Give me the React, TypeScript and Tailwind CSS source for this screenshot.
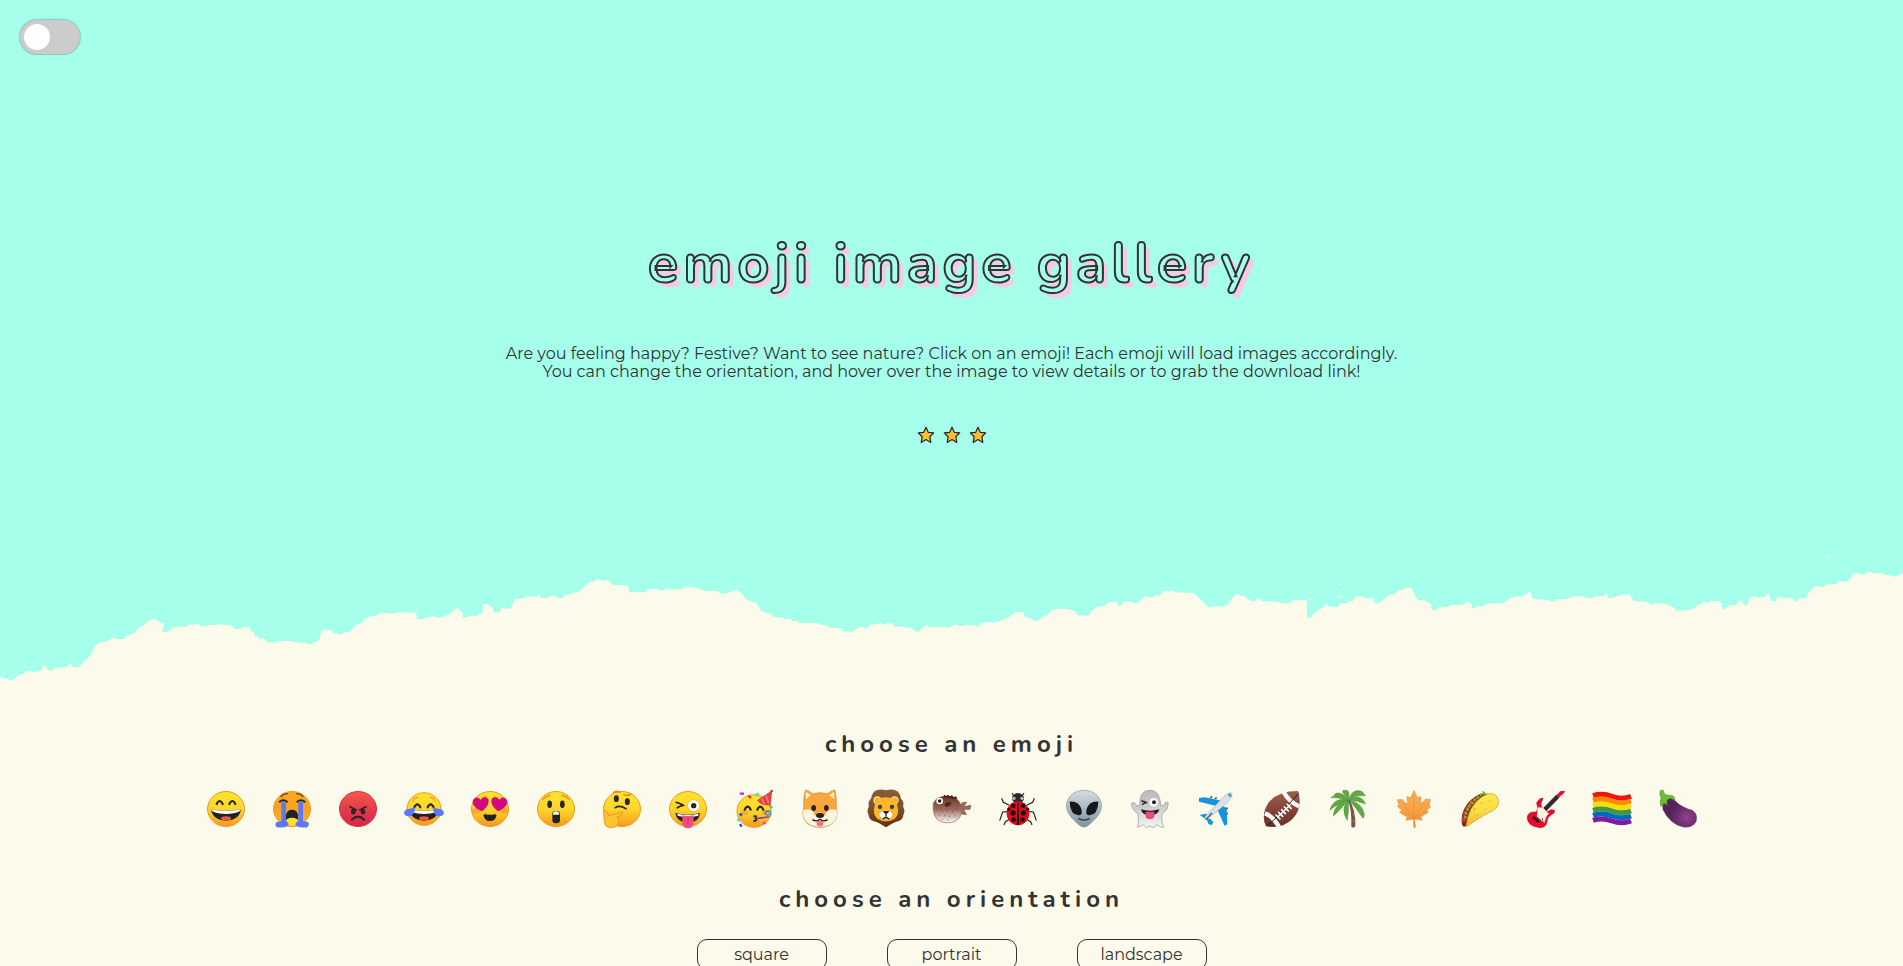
import type { ReactNode } from 'react'

const shoreLeft =
  '0,408 6,414 18,416 24,420 36,418 44,406 58,402 62,394 74,393 80,397 100,393 106,377 113,378 116,389 128,393 134,383 163,382 168,371 174,371 180,382 195,381 203,368 222,346 230,325 241,308 264,303 275,293 282,297 304,297 310,288 330,280 338,264 352,256 367,241 376,237 388,243 391,248 402,252 397,276 411,276 426,261 455,260 462,255 478,254 485,248 492,259 508,258 515,255 535,254 540,250 545,254 565,255 575,266 590,268 594,261 610,261 617,277 624,278 624,288 632,289 634,298 645,294 656,307 680,307 684,303 716,303 720,307 748,308 752,312 766,312 770,306 780,302 785,290 787,271 814,271 816,280 830,281 835,286 843,277 858,275 872,254 888,249 892,238 908,230 912,227 922,228 926,222 940,219 965,221 972,217 1020,218 1021,238 1037,238 1040,233 1052,232 1060,228 1068,232 1085,232 1105,219 1110,211 1120,205 1133,217 1134,233 1146,232 1150,228 1170,227 1174,222 1182,221 1183,191 1194,192 1207,203 1209,217 1225,216 1227,205 1233,203 1238,207 1251,205 1262,177 1285,175 1290,170 1315,169 1321,163 1326,174 1342,174 1355,165 1367,174 1381,174 1384,165 1402,163 1405,158 1418,157 1432,137 1447,126 1458,123 1464,117 1475,122 1490,119 1502,136 1518,135 1540,137 1541,158 1555,157 1568,155 1568,452 0,452'
const shoreMiddle =
  '0,158 14,155 20,158 40,156 44,148 68,148 72,152 84,151 90,145 96,149 128,148 132,141 140,139 146,142 165,143 170,148 184,152 212,153 218,158 228,162 246,157 261,149 272,160 286,179 310,190 320,210 332,218 347,222 352,232 375,233 380,238 392,235 397,243 410,242 412,248 462,249 466,254 480,256 490,264 519,265 522,275 548,275 554,266 570,260 580,265 592,252 600,254 612,249 624,254 630,249 644,252 648,260 670,260 680,265 688,263 700,275 709,275 713,267 728,255 732,261 775,261 783,265 792,255 800,254 806,259 820,256 846,256 850,260 858,259 861,250 880,245 890,248 908,243 930,230 944,217 963,216 968,232 980,235 993,243 1000,243 1010,230 1022,226 1034,211 1050,206 1074,207 1090,215 1097,226 1123,227 1130,213 1145,200 1162,199 1170,190 1182,185 1193,186 1197,200 1205,194 1209,185 1228,185 1232,190 1244,189 1262,169 1278,174 1290,164 1298,169 1306,153 1325,154 1329,150 1334,157 1380,159 1395,174 1416,201 1428,201 1433,196 1440,201 1464,196 1470,181 1486,162 1494,167 1508,169 1514,178 1527,185 1530,185 1538,174 1550,184 1568,185 1568,452 0,452'
const shoreRight =
  '0,185 38,185 42,190 66,190 74,181 107,180 108,233 122,232 120,226 145,202 150,203 153,191 163,200 184,201 188,192 207,189 212,184 222,182 228,169 244,170 248,175 271,175 273,190 285,189 308,165 322,163 334,150 348,148 352,143 363,143 378,179 398,182 412,192 413,211 424,211 428,203 455,200 461,195 490,194 500,184 510,190 513,206 525,201 530,195 534,202 550,191 588,190 606,174 624,169 643,167 650,154 657,157 658,174 670,178 700,180 706,185 715,184 720,177 744,178 750,174 765,169 785,169 790,174 806,174 812,170 834,167 842,159 846,174 860,173 870,167 885,164 898,163 908,184 940,185 950,195 958,190 986,191 1010,206 1012,212 1040,211 1056,205 1065,195 1082,185 1088,190 1096,184 1118,183 1124,192 1125,207 1132,206 1143,196 1160,195 1166,183 1173,181 1177,195 1187,194 1193,172 1208,169 1215,174 1230,170 1239,160 1244,181 1255,185 1262,171 1275,174 1297,175 1302,184 1310,184 1314,175 1332,173 1336,160 1355,138 1375,142 1380,133 1404,133 1408,122 1428,126 1438,118 1446,101 1460,100 1466,105 1488,95 1494,100 1518,100 1524,105 1538,106 1546,110 1555,108 1562,101 1568,100 1575,100 1575,452 0,452'

function TornEdge() {
  return (
    <svg className="block h-[150px] w-full bg-[#a6ffea]" viewBox="0 0 4662.35 450" preserveAspectRatio="none" aria-hidden="true">
      <g fill="#fcfaea">
        <polygon points={shoreLeft} />
        <polygon points={shoreMiddle} transform="translate(1543.5 0)" />
        <g transform="translate(3094.4 0)">
          <polygon points={shoreRight} />
          <ellipse cx="115" cy="176" rx="4" ry="3" />
          <ellipse cx="187" cy="133" rx="3" ry="3.5" />
          <ellipse cx="187" cy="171" rx="3" ry="3.5" />
          <ellipse cx="1382" cy="50" rx="5" ry="7" opacity=".35" />
        </g>
      </g>
    </svg>
  )
}

function Gradients() {
  const stops: [string, string, string, string][] = [
    ['face', '#fde32f', '#fcd62c', '#f59a1e'],
    ['sad', '#f9a825', '#f6a323', '#fbb423'],
    ['rage', '#f7584d', '#e23c4a', '#d62748'],
    ['shiba', '#fbaa3c', '#f9a53c', '#f0932b'],
    ['fur', '#8a5c36', '#7d4f2b', '#5d330e'],
    ['fish', '#6b2f22', '#9a6a5c', '#ffffff'],
    ['alien', '#d5dde2', '#a9b7c0', '#82929c'],
    ['ghost', '#b9b9b9', '#d0d0d0', '#f5f5f5'],
    ['ball', '#a15c48', '#85463a', '#653128'],
    ['leaf', '#fcb04e', '#f9a245', '#f29140'],
    ['taco', '#ffe94c', '#fcdc48', '#f0b92e'],
  ]
  return (
    <svg className="absolute size-0" aria-hidden="true">
      <defs>
        {stops.map(([id, a, b, c]) => (
          <linearGradient key={id} id={id} x1="0" y1="0" x2="0" y2="1">
            <stop offset="0" stopColor={a} />
            <stop offset=".5" stopColor={b} />
            <stop offset="1" stopColor={c} />
          </linearGradient>
        ))}
        <radialGradient id="plum" cx=".72" cy=".68" r=".5">
          <stop offset="0" stopColor="#93408f" />
          <stop offset="1" stopColor="#542459" />
        </radialGradient>
      </defs>
    </svg>
  )
}

const Face = ({ fill = 'url(#face)', edge = '#f09a20' }: { fill?: string; edge?: string }) => (
  <ellipse cx="60" cy="60" rx="55.5" ry="52.5" fill={fill} stroke={edge} strokeWidth="3" />
)
const Arcs = ({ y, l = 41, r = 79 }: { y: number; l?: number; r?: number }) => (
  <g fill="none" stroke="#2b2520" strokeWidth="6.5" strokeLinecap="round" transform={`translate(0 ${y})`}>
    <path d={`M${l - 9} 5Q${l} -13 ${l + 9} 5`} />
    <path d={`M${r - 9} 5Q${r} -13 ${r + 9} 5`} />
  </g>
)
const Grin = () => (
  <g>
    <path d="M15 61Q60 70 105 61Q100 94 60 95Q20 94 15 61Z" fill="#222" />
    <path d="M15 61Q60 70 105 61Q102 74 60 75Q18 74 15 61Z" fill="#fff" />
    <ellipse cx="60" cy="88" rx="15" ry="6" fill="#ef5350" />
  </g>
)

const emojis: [string, ReactNode][] = [
  ['happy', <><Face /><Arcs y={40} /><Grin /></>],
  ['sad', <>
    <Face fill="url(#sad)" />
    <g fill="none" stroke="#6d4b2a" strokeWidth="4" strokeLinecap="round"><path d="M27 23Q34 14 46 14M74 14Q86 14 93 23" /></g>
    <g fill="none" stroke="#2b2520" strokeWidth="6" strokeLinecap="round"><path d="M23 38Q34 29 45 38M76 38Q87 29 98 38" /></g>
    <path d="M42 94V78Q45 62 60 62T78 78V94Z" fill="#222" /><ellipse cx="60" cy="98" rx="19" ry="12" fill="#fde030" />
    <path d="M28 38H42V96Q52 101 49 109Q42 118 14 115Q6 106 14 99L28 96ZM79 38H93V96L108 99Q114 106 106 115Q78 118 71 109Q68 101 79 96Z" fill="#5c78f8" />
  </>],
  ['angry', <>
    <Face fill="url(#rage)" edge="#d93246" />
    <g stroke="#292528" fill="none" strokeWidth="5" strokeLinecap="round"><path d="M36 53L55 63M84 53L65 63" /><path d="M42 92Q60 74 79 92" strokeWidth="6" /></g>
    <ellipse cx="46" cy="68" rx="7" ry="8" fill="#292528" /><ellipse cx="75" cy="68" rx="7" ry="8" fill="#292528" />
  </>],
  ['laughing', <>
    <ellipse cx="60" cy="60" rx="51" ry="49" fill="url(#face)" stroke="#f09a20" strokeWidth="3" />
    <path d="M26 36Q31 25 42 25M78 25Q89 25 94 36" fill="none" stroke="#ee9823" strokeWidth="4" />
    <Arcs y={50} l={40} r={80} /><Grin />
    <path d="M34 55Q32 76 21 81Q7 85 1 76Q-2 66 9 61Q20 59 34 55ZM86 55Q88 76 99 81Q113 85 119 76Q122 66 111 61Q100 59 86 55Z" fill="#5c78f8" />
  </>],
  ['love', <>
    <Face /><ellipse cx="18" cy="65" rx="13" ry="8" fill="#f58a38" opacity=".6" /><ellipse cx="102" cy="65" rx="13" ry="8" fill="#f58a38" opacity=".6" />
    <g fill="#d5087f" stroke="#bb066d" strokeWidth="1.5">
      <path d="M37 66C24 61 8 52 9 38C10 24 27 23 32 34C39 19 57 23 55 38C54 50 45 58 37 66Z" />
      <path d="M83 66C96 61 112 52 111 38C110 24 93 23 88 34C81 19 63 23 65 38C66 50 75 58 83 66Z" />
    </g>
    <path d="M41 81Q39 75 46 76Q60 79 74 76Q81 75 79 81Q76 96 60 96T41 81Z" fill="#222" />
  </>],
  ['surprised', <>
    <Face /><path d="M22 31Q29 20 42 20M78 20Q91 20 98 31" fill="none" stroke="#ee9823" strokeWidth="5" strokeLinecap="round" />
    <ellipse cx="41" cy="46" rx="7" ry="11.5" fill="#2b2520" /><ellipse cx="79" cy="46" rx="7" ry="11.5" fill="#2b2520" />
    <rect x="49" y="66" width="23" height="37" rx="10" fill="#222" /><path d="M51 77Q51 67 60 67T70 77Z" fill="#fff" />
  </>],
  ['thinking', <>
    <Face /><path d="M34 12Q40 3 54 10M66 17Q78 22 86 15" fill="none" stroke="#e88f20" strokeWidth="5" strokeLinecap="round" />
    <ellipse cx="43" cy="29" rx="7.5" ry="10" fill="#2b2520" /><ellipse cx="76" cy="38" rx="7.5" ry="10" fill="#2b2520" />
    <path d="M40 56Q52 47 72 59" fill="none" stroke="#2b2520" strokeWidth="5" strokeLinecap="round" />
    <path d="M6 68Q15 61 20 80Q34 77 55 69Q65 67 61 75Q56 81 44 85Q54 86 50 94Q50 109 37 114Q21 120 11 110Q5 101 6 68Z" fill="#fdc62e" stroke="#ef9423" strokeWidth="3" strokeLinejoin="round" />
  </>],
  ['silly', <>
    <Face /><path d="M25 40Q36 42 45 49Q36 51 28 56" fill="none" stroke="#2b2520" strokeWidth="5.5" strokeLinecap="round" />
    <circle cx="77" cy="50" r="18" fill="#fff" stroke="#e7a722" strokeWidth="2" /><circle cx="77" cy="50" r="8" fill="#2b2520" />
    <path d="M22 72Q60 81 96 72Q94 101 60 101T22 72Z" fill="#222" /><path d="M28 74Q60 81 91 74V80Q60 87 29 80Z" fill="#fff" />
    <path d="M43 79Q60 84 77 79V98Q76 118 60 118T43 98Z" fill="#ed4e7e" /><path d="M60 84V106" stroke="#bd3863" strokeWidth="3" />
  </>],
  ['party', <>
    <ellipse cx="60" cy="66" rx="51" ry="49" fill="url(#face)" stroke="#f09a20" strokeWidth="3" />
    <ellipse cx="31" cy="71" rx="11" ry="7" fill="#f58a38" opacity=".6" /><ellipse cx="94" cy="70" rx="10" ry="7" fill="#f58a38" opacity=".6" />
    <Arcs y={57} l={41} r={79} /><path d="M113 6L71 34Q81 49 109 48Z" fill="#e24446" stroke="#b93238" strokeWidth="2" /><path d="M83 29L91 45M96 20L104 43" stroke="#f58a86" strokeWidth="4" />
    <circle cx="113" cy="6" r="4" fill="#d83942" /><path d="M58 82Q72 78 64 88Q74 93 58 97" fill="none" stroke="#292522" strokeWidth="5" />
    <path d="M70 88L104 84" stroke="#81439c" strokeWidth="5" /><path d="M106 84Q116 68 103 66Q91 67 94 75Q101 82 105 74" fill="none" stroke="#4786c7" strokeWidth="4" />
    <g strokeWidth="7"><path d="M17 14H30" stroke="#f319bd" /><path d="M64 20L74 13" stroke="#2ce0ec" /><path d="M43 20L51 27" stroke="#e93532" /><path d="M108 50L114 57" stroke="#53ca35" /><path d="M17 74L24 80M18 105L23 113" stroke="#2347de" /><path d="M10 91L18 95" stroke="#2ce0ec" /><path d="M87 104L95 101" stroke="#f33bce" /></g>
  </>],
  ['dog', <>
    <path d="M16 3Q19 1 38 14Q60 8 82 14Q101 1 105 3Q111 32 109 55Q118 88 94 106Q60 125 25 106Q2 89 11 55Q9 27 16 3Z" fill="url(#shiba)" stroke="#d58b39" strokeWidth="2" />
    <path d="M18 8L32 19L17 31ZM102 8L88 19L103 31Z" fill="#fff5ca" />
    <path d="M10 63Q40 54 45 82Q52 68 60 70Q68 68 75 82Q80 54 110 63Q116 92 92 106Q60 123 28 106Q4 90 10 63Z" fill="#fff4df" />
    <ellipse cx="41" cy="57" rx="7" ry="9" fill="#26211f" /><ellipse cx="79" cy="57" rx="7" ry="9" fill="#26211f" /><ellipse cx="60" cy="79" rx="12" ry="8" fill="#26211f" />
    <path d="M37 92Q50 100 60 91Q70 100 83 92" fill="none" stroke="#26211f" strokeWidth="4" /><path d="M50 96H70V106Q68 113 60 113T50 106Z" fill="#f2776f" />
  </>],
  ['lion', <>
    <path d="M60 4Q82 -2 96 8Q104 18 105 29Q116 39 111 52Q119 67 112 78Q111 91 99 96Q84 99 60 115Q36 99 21 96Q9 91 8 78Q1 67 9 52Q4 39 15 29Q16 18 24 8Q38 -2 60 4Z" fill="url(#fur)" />
    <circle cx="34" cy="34" r="10" fill="#f3a834" stroke="#fbdb7a" strokeWidth="4" /><circle cx="86" cy="34" r="10" fill="#f3a834" stroke="#fbdb7a" strokeWidth="4" />
    <path d="M27 45Q32 25 60 25T93 45Q102 77 86 89Q60 105 34 89Q18 77 27 45Z" fill="#fcb72a" />
    <circle cx="42" cy="54" r="6.5" fill="#433d32" /><circle cx="78" cy="54" r="6.5" fill="#433d32" />
    <ellipse cx="60" cy="77" rx="19" ry="12" fill="#fff" /><path d="M51 66H69Q69 71 60 76Q51 71 51 66ZM58 73H62V83H58Z" fill="#322" /><path d="M50 91Q60 80 70 91" fill="none" stroke="#322" strokeWidth="4" />
  </>],
  ['blowfish', <>
    <path d="M83 52L91 41L104 40L95 53L116 49L114 61L95 61L103 77L87 74Z" fill="#996a60" stroke="#75483e" strokeWidth="2" />
    <path d="M4 43Q12 23 42 21Q76 20 87 48Q97 84 67 98Q44 106 21 95Q0 82 4 43Z" fill="url(#fish)" stroke="#8c6054" strokeWidth="2" />
    <path d="M33 23L38 17L42 22L49 17L53 23L60 18L64 25L73 22L75 31" fill="#4c1d14" /><circle cx="23" cy="36" r="10" fill="#fff" /><circle cx="23" cy="36" r="5" fill="#181818" />
    <path d="M38 45Q48 34 58 42Q53 55 40 53Z" fill="#4b2821" /><path d="M14 62H16M29 66H31M44 62H46M60 68H62M73 60H75M21 80H23M37 80H39M52 82H54M68 81H70M30 92H32M47 94H49" stroke="#5b3930" strokeWidth="3" />
  </>],
  ['ladybug', <>
    <path d="M42 12L50 24M78 12L70 24M34 49L16 40L11 28M86 49L104 40L109 28M29 68L14 69L5 95M91 68L106 69L115 95M35 91L22 98L18 108M85 91L98 98L102 108" fill="none" stroke="#222" strokeWidth="3.5" />
    <ellipse cx="60" cy="28" rx="18" ry="16" fill="#292b2d" /><circle cx="48" cy="28" r="5" fill="#bbb" /><circle cx="72" cy="28" r="5" fill="#bbb" />
    <ellipse cx="60" cy="73" rx="34" ry="36" fill="#e90919" /><path d="M59 38H61L64 108H56Z" fill="#161617" />
    <g fill="#171717"><circle cx="46" cy="50" r="7" /><circle cx="75" cy="50" r="7" /><circle cx="45" cy="72" r="8" /><circle cx="76" cy="72" r="8" /><circle cx="47" cy="92" r="7" /><circle cx="74" cy="92" r="7" /><circle cx="32" cy="61" r="5" /><circle cx="89" cy="61" r="5" /></g>
  </>],
  ['alien', <>
    <path d="M60 4C96 4 116 31 112 58C108 80 86 98 71 111Q60 118 49 111C34 98 12 80 8 58C4 31 24 4 60 4Z" fill="url(#alien)" stroke="#899aa4" strokeWidth="2" />
    <path d="M17 38Q43 35 52 60Q57 80 43 79Q18 76 17 38ZM103 38Q77 35 68 60Q63 80 77 79Q102 76 103 38Z" fill="#171919" /><path d="M45 89Q60 97 75 89" fill="none" stroke="#34434b" strokeWidth="5" strokeLinecap="round" />
  </>],
  ['ghost', <>
    <path d="M60 4C82 4 91 22 92 51Q102 53 107 40Q117 38 114 49Q112 65 97 73Q92 98 102 115L92 114L80 107L70 116L60 111L49 116L40 107L23 115Q28 98 24 73Q9 68 5 48Q5 36 14 42Q20 54 29 51C29 19 38 4 60 4Z" fill="url(#ghost)" stroke="#929292" strokeWidth="2" />
    <path d="M34 36Q42 36 49 41Q42 43 36 47" fill="none" stroke="#242424" strokeWidth="4" /><circle cx="71" cy="40" r="14" fill="#fff" stroke="#999" /><circle cx="72" cy="40" r="6" fill="#222" />
    <path d="M33 61Q60 69 88 61Q84 79 60 79T33 61Z" fill="#242424" /><path d="M47 68H73V81Q72 91 60 91T47 81Z" fill="#e94d7b" />
  </>],
  ['plane', <>
    <path d="M9 27L26 25L84 36L65 52L9 38ZM78 50L92 56L94 105L86 111L63 59Z" fill="#1495df" /><path d="M11 78L28 74L44 82L32 92ZM43 89L52 100L47 109L37 105L32 90Z" fill="#1697d8" />
    <path d="M29 91L27 84L79 27Q97 9 107 12Q112 19 97 38L38 88Z" fill="#dde1e4" stroke="#aab0b5" strokeWidth="2" /><path d="M98 15L105 22" stroke="#20a9e5" strokeWidth="8" />
    <path d="M29 92L48 72" stroke="#505d68" strokeWidth="4" /><path d="M43 28L48 22M57 30L62 25M88 60L96 57M88 76L96 73" stroke="#59656d" strokeWidth="5" />
  </>],
  ['football', <>
    <path d="M12 112Q-5 77 21 39Q49 6 108 6Q124 56 92 89Q62 120 12 112Z" fill="url(#ball)" />
    <path d="M9 73Q33 83 51 113M65 9Q80 37 111 52" fill="none" stroke="#fff" strokeWidth="13" /><path d="M17 110L45 84L110 13" fill="none" stroke="#211a19" strokeWidth="3" />
    <path d="M47 84L84 48M42 78L54 90M50 70L62 82M59 62L70 74M67 54L79 66M76 46L87 58" stroke="#fff" strokeWidth="5" strokeLinecap="round" />
  </>],
  ['nature', <>
    <path d="M58 35Q71 48 70 113Q78 119 82 112Q84 67 64 31Z" fill="#755548" />
    <g fill="#62a842" stroke="#3f8c36" strokeWidth="1.5"><path d="M60 34Q43 7 23 13Q20 21 8 26Q28 24 60 34Z" /><path d="M59 32Q18 23 5 64Q17 52 59 32Z" /><path d="M61 32Q17 46 16 81Q35 65 61 32Z" /><path d="M61 34Q36 60 58 94Q63 67 61 34Z" /><path d="M61 32Q33 1 51 4Q68 1 61 32Z" /><path d="M62 31Q74 -3 101 7Q109 14 112 20Q85 17 62 31Z" /><path d="M63 32Q97 11 113 45Q91 36 63 32Z" /><path d="M64 33Q102 42 109 75Q107 87 105 88Q86 60 64 33Z" /></g>
    <path d="M75 61L80 64M76 77L81 80M76 94L82 97" stroke="#c19b87" strokeWidth="3" />
  </>],
  ['autumn', <>
    <path d="M60 5L70 26L81 23L78 44L92 36L94 30L109 32L105 49L110 53L98 64L103 69L80 84L84 94L62 90L64 115H59V90L36 94L40 84L16 70L24 64L10 52L15 47L10 32L26 32L29 39L42 45L39 23L50 26Z" fill="url(#leaf)" stroke="#ea8e3b" strokeWidth="2" strokeLinejoin="round" /><path d="M60 20V90L32 50M60 90L87 50M60 90L24 66M60 90L95 66" fill="none" stroke="#de8537" strokeWidth="1.5" />
  </>],
  ['taco', <>
    <path d="M6 107Q-1 57 43 25Q62 10 77 14L89 29L22 106L12 115Z" fill="#7a321b" /><path d="M12 98Q9 58 49 29" fill="none" stroke="#e22f2d" strokeWidth="13" strokeDasharray="13 6" /><path d="M15 88Q18 52 55 24L69 11L84 18" fill="none" stroke="#74bd2d" strokeWidth="8" strokeDasharray="8 4" />
    <path d="M19 113Q22 56 65 24Q100 2 112 25Q124 49 98 66Q82 71 19 113Z" fill="url(#taco)" stroke="#cb9827" strokeWidth="2" /><path d="M42 59L45 61M64 41L66 43M76 60L78 61M51 80L53 81M88 35L90 37" stroke="#d6941c" strokeWidth="4" />
  </>],
  ['music', <>
    <path d="M50 68L96 21" stroke="#2c2c2e" strokeWidth="13" /><path d="M91 19L104 6H117L114 12L97 27Z" fill="#e20f32" />
    <path d="M32 42Q40 26 51 27L49 33Q37 52 58 65Q68 70 75 62L85 64Q88 73 76 77Q64 82 62 103Q56 120 32 114Q7 109 4 89Q3 67 29 69Q39 65 32 42Z" fill="#e9082e" stroke="#bf0b2b" strokeWidth="2" />
    <path d="M35 55Q34 75 32 82L56 103Q59 80 69 74L51 56Z" fill="#fff5df" /><path d="M21 83L39 100" stroke="#2b2024" strokeWidth="8" /><path d="M48 91H51M53 98H55" stroke="#222" strokeWidth="5" />
  </>],
  ['pride', <g fill="none" strokeWidth="15"><path d="M3 20Q31 11 60 22T117 22" stroke="#f31412" /><path d="M3 34Q31 25 60 36T117 36" stroke="#fb8a00" /><path d="M3 49Q31 40 60 51T117 51" stroke="#ffdd00" /><path d="M3 64Q31 55 60 66T117 66" stroke="#3d9943" /><path d="M3 79Q31 70 60 81T117 81" stroke="#0967bd" /><path d="M3 94Q31 85 60 96T117 96" stroke="#7f1aa5" /></g>],
  ['eggplant', <>
    <path d="M31 25Q44 22 52 36Q70 55 103 64Q121 77 114 98Q104 117 75 114Q35 104 15 62Q10 38 31 25Z" fill="url(#plum)" stroke="#723374" strokeWidth="1.5" />
    <path d="M7 5L15 3Q17 15 25 18L43 20Q51 24 50 33L36 28L27 33L26 48L18 42L9 52Q3 39 10 27Q3 17 7 5Z" fill="#70bb36" stroke="#4b962d" strokeWidth="2" />
  </>],
]

function Star() {
  return (
    <svg className="size-[18px]" viewBox="0 0 18 18" aria-hidden="true">
      <path d="M9 1.3L11.3 6.3L16.7 6.9L12.8 10.7L13.8 16.4L9 13.6L4.2 16.4L5.2 10.7L1.3 6.9L6.7 6.3Z" fill="#fdbf2d" stroke="#222" strokeWidth="1.2" strokeLinejoin="round" />
    </svg>
  )
}

export default function App() {
  return (
    <div className="flex h-[966px] flex-col overflow-hidden bg-[#fcfaea] font-[Montserrat,sans-serif] text-base text-[#333]">
      <Gradients />
      <header className="flex h-[540px] shrink-0 flex-col items-center bg-[#a6ffea]">
        <div className="flex w-full p-5">
          <button aria-label="Toggle theme" className="flex h-[34px] w-[60px] items-center rounded-full bg-[#ccc] px-1 shadow-[0_0_1px_1px_#8cc8b9]">
            <span className="size-[26px] rounded-full bg-white" />
          </button>
        </div>
        <h1 className="mt-[152px] font-[Nunito,sans-serif] text-[56px] leading-[76px] font-bold tracking-[5px] text-[#a6ffea] [-webkit-text-stroke:2px_#333] [text-shadow:5px_5px_#f4cbe6]">
          emoji image gallery
        </h1>
        <p className="mt-[43px] text-center leading-[18px]">
          Are you feeling happy? Festive? Want to see nature? Click on an emoji! Each emoji will load images accordingly.
          <br />
          You can change the orientation, and hover over the image to view details or to grab the download link!
        </p>
        <div className="mt-[45px] flex gap-2">
          <Star />
          <Star />
          <Star />
        </div>
      </header>
      <div className="shrink-0"><TornEdge /></div>
      <main className="flex flex-col items-center">
        <h2 className="mt-[38px] font-[Nunito,sans-serif] text-2xl leading-8 font-bold tracking-[5px]">choose an emoji</h2>
        <div className="mt-[29px] flex">
          {emojis.map(([name, art]) => (
            <button key={name} aria-label={name} className="flex w-[66px] justify-center">
              <svg className="size-10 overflow-visible" viewBox="0 0 120 120">{art}</svg>
            </button>
          ))}
        </div>
        <h2 className="mt-[54px] font-[Nunito,sans-serif] text-2xl leading-8 font-bold tracking-[5px]">choose an orientation</h2>
        <div className="mt-6 flex gap-[60px]">
          <button className="h-[31px] w-[130px] rounded-[10px] border border-[#333]">square</button>
          <button className="h-[31px] w-[130px] rounded-[10px] border border-[#333]">portrait</button>
          <button className="h-[31px] w-[130px] rounded-[10px] border border-[#333]">landscape</button>
        </div>
      </main>
    </div>
  )
}
